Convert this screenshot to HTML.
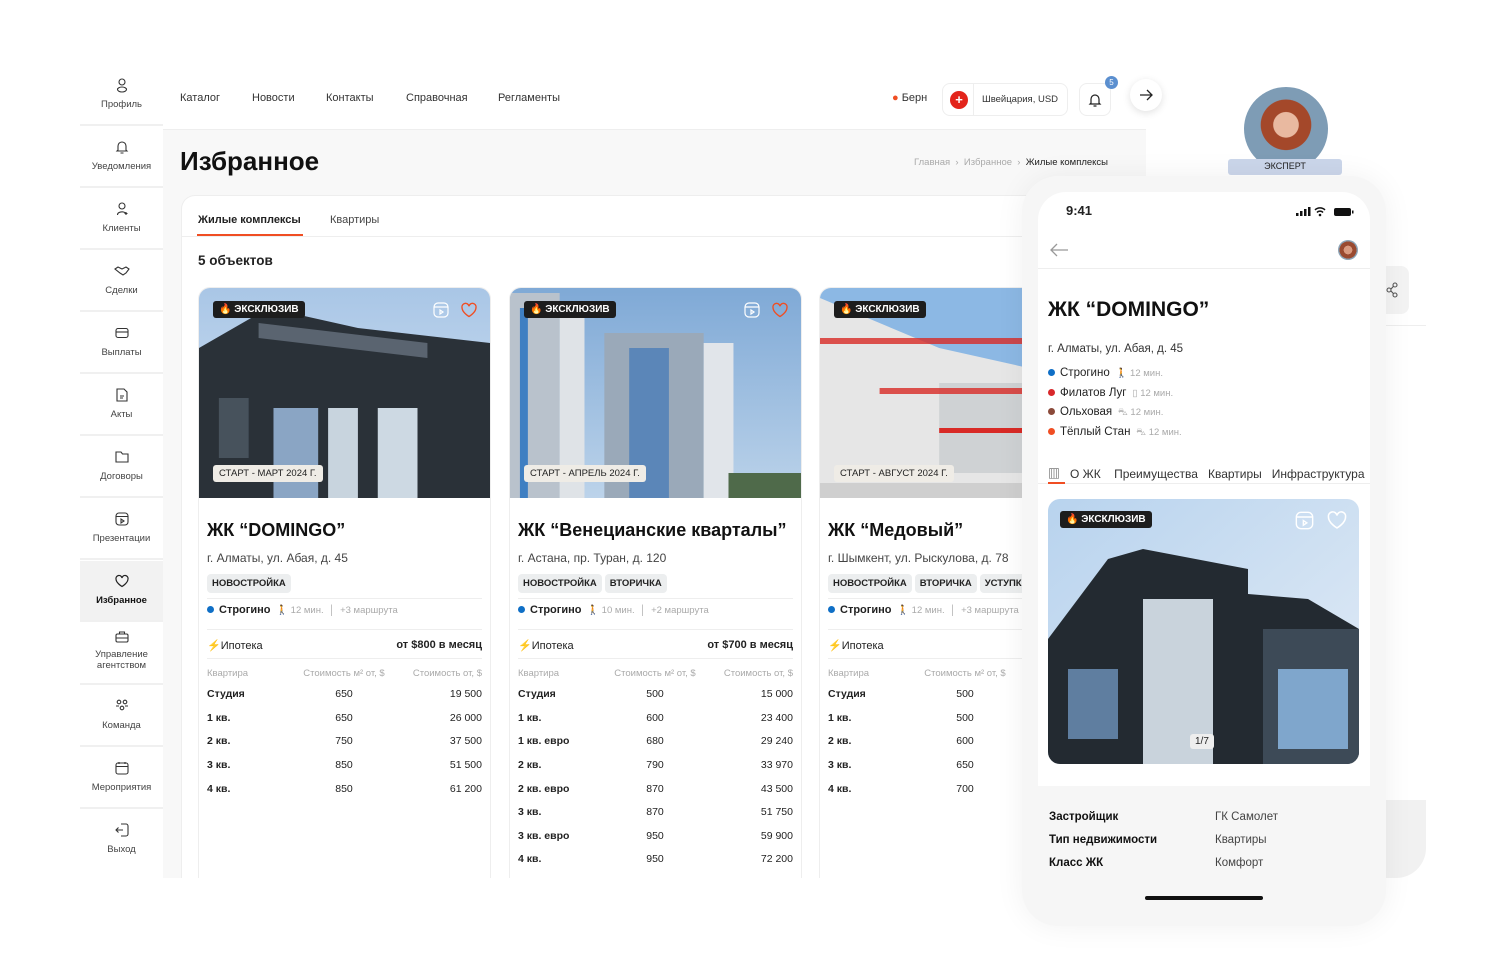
<!DOCTYPE html>
<html><head><meta charset="utf-8"><style>
*{box-sizing:border-box;margin:0;padding:0}
body{width:1506px;height:958px;background:#fff;font-family:"Liberation Sans","Noto Sans CJK SC",sans-serif;color:#222;position:relative;overflow:hidden}
.abs{position:absolute}
.side{left:80px;top:65px;width:83px;height:813px;background:#fff}
.si{position:absolute;left:0;width:83px;height:61px;border-bottom:2px solid #f0f0f0;text-align:center;font-size:9.5px;color:#444}
.si svg{display:block;margin:12px auto 6px;width:16px;height:16px}
.si.act{background:#f2f2f2;color:#111;font-weight:bold}
.main{left:163px;top:65px;width:983px;height:813px;background:#f8f8f8}
.hdr{left:163px;top:65px;width:983px;height:65px;background:#fff;border-bottom:1px solid #eee}
.nav{position:absolute;top:27px;font-size:11px;color:#333}
.panel{left:181px;top:195px;width:860px;height:683px;background:#fff;border-radius:14px 0 0 0;border:1px solid #eee;border-bottom:0}
.card{position:absolute;top:287px;width:293px;height:591px;background:#fff;border:1px solid #eee;border-bottom:0;border-radius:12px 12px 0 0;overflow:hidden}
.img{position:absolute;left:0;top:0;width:100%;height:210px}
.badge{position:absolute;left:14px;top:13px;background:#1d1d1d;color:#fff;font-size:10px;padding:3px 6px;border-radius:3px;font-weight:bold}
.start{position:absolute;left:14px;top:177px;background:#efece6;color:#222;font-size:9.5px;padding:3px 6px;border-radius:3px}
.ttl{position:absolute;left:8px;top:232px;font-size:18px;font-weight:bold;color:#111;white-space:nowrap}
.addr{position:absolute;left:8px;top:263px;font-size:12px;color:#444;white-space:nowrap}
.tags{position:absolute;left:8px;top:285px;white-space:nowrap}
.tag{display:inline-block;background:#eceeef;font-size:9.5px;font-weight:bold;padding:4px 5px;border-radius:4px;margin-right:3px;color:#222}
.ln{position:absolute;left:8px;right:8px;height:1px;background:#eee}
.metro{position:absolute;left:8px;top:316px;font-size:11px;white-space:nowrap;color:#222}
.dot{display:inline-block;width:7px;height:7px;border-radius:50%;margin-right:5px}
.gr{color:#aaa;font-size:9.5px}
.ip{position:absolute;left:8px;right:8px;top:351px;font-size:11px}
.tb{position:absolute;left:8px;right:8px;font-size:10.5px;color:#222;font-weight:bold}
.tb span{position:absolute}
.tb .c2{left:92px;width:90px;text-align:center;font-weight:normal}
.tb .c3{right:0;font-weight:normal}
.th{color:#aaa;font-weight:normal;font-size:9.5px}
.phone{left:1022px;top:176px;width:364px;height:750px;background:#f6f6f6;border-radius:36px;box-shadow:0 0 30px rgba(0,0,0,.06)}
.scr{left:1038px;top:192px;width:332px;height:594px;background:#fff;border-radius:28px 28px 0 0}
</style></head><body>

<!-- sidebar -->
<div class="abs side">
<div class="si" style="top:0"><svg viewBox="0 0 16 16" fill="none" stroke="#333" stroke-width="1.1"><circle cx="8" cy="5" r="3"/><ellipse cx="8" cy="12.5" rx="4.5" ry="2.5"/></svg>Профиль</div>
<div class="si" style="top:62px"><svg viewBox="0 0 16 16" fill="none" stroke="#333" stroke-width="1.1"><path d="M4 11V7a4 4 0 018 0v4l1 1H3z M6.5 14h3"/></svg>Уведомления</div>
<div class="si" style="top:124px"><svg viewBox="0 0 16 16" fill="none" stroke="#333" stroke-width="1.1"><circle cx="8" cy="5" r="3"/><path d="M3.5 14a4.5 3 0 018-2 M12 11v3M10.5 12.5h3"/></svg>Клиенты</div>
<div class="si" style="top:186px"><svg viewBox="0 0 16 16" fill="none" stroke="#333" stroke-width="1.1"><path d="M1 6l3-2 4 2 4-2 3 2-3 4-3 2-3-2z"/></svg>Сделки</div>
<div class="si" style="top:248px"><svg viewBox="0 0 16 16" fill="none" stroke="#333" stroke-width="1.1"><rect x="2" y="3.5" width="12" height="9" rx="2"/><path d="M2 7h12"/></svg>Выплаты</div>
<div class="si" style="top:310px"><svg viewBox="0 0 16 16" fill="none" stroke="#333" stroke-width="1.1"><path d="M3 2h7l3 3v9H3z M6 9h4M6 11h3"/></svg>Акты</div>
<div class="si" style="top:372px"><svg viewBox="0 0 16 16" fill="none" stroke="#333" stroke-width="1.1"><path d="M2 3h5l1.5 2H14v8H2z"/></svg>Договоры</div>
<div class="si" style="top:434px"><svg viewBox="0 0 16 16" fill="none" stroke="#333" stroke-width="1.1"><rect x="2" y="2" width="12" height="12" rx="3"/><path d="M2 5.5h12M7 8v4l3-2z"/></svg>Презентации</div>
<div class="si act" style="top:496px"><svg viewBox="0 0 16 16" fill="none" stroke="#222" stroke-width="1.2"><path d="M8 13.5S2 10 2 6a3 3 0 016-1 3 3 0 016 1c0 4-6 7.5-6 7.5z"/></svg>Избранное</div>
<div class="si" style="top:558px;height:62px"><svg viewBox="0 0 16 16" fill="none" stroke="#333" stroke-width="1.1" style="margin-top:6px;margin-bottom:4px"><rect x="2" y="5" width="12" height="8" rx="1.5"/><path d="M5.5 5V3h5v2M2 9h12"/></svg>Управление<br>агентством</div>
<div class="si" style="top:621px"><svg viewBox="0 0 16 16" fill="none" stroke="#333" stroke-width="1.1"><circle cx="5" cy="4" r="1.8"/><circle cx="11" cy="4" r="1.8"/><circle cx="8" cy="10" r="1.8"/><path d="M2 8h3M11 8h3"/></svg>Команда</div>
<div class="si" style="top:683px"><svg viewBox="0 0 16 16" fill="none" stroke="#333" stroke-width="1.1"><rect x="2" y="3" width="12" height="11" rx="2"/><path d="M2 6.5h12M5 2v2M11 2v2"/></svg>Мероприятия</div>
<div class="si" style="top:745px;border:0"><svg viewBox="0 0 16 16" fill="none" stroke="#333" stroke-width="1.1"><path d="M7 2h5a2 2 0 012 2v8a2 2 0 01-2 2H7 M2 8h7M4.5 5.5L2 8l2.5 2.5"/></svg>Выход</div>
</div>

<div class="abs main"></div>
<div class="abs hdr">
<span class="nav" style="left:17px">Каталог</span>
<span class="nav" style="left:89px">Новости</span>
<span class="nav" style="left:163px">Контакты</span>
<span class="nav" style="left:243px">Справочная</span>
<span class="nav" style="left:335px">Регламенты</span>
<span class="nav" style="left:729px;font-size:11px"><span style="color:#f04e23">●</span> Берн</span>
<div class="abs" style="left:779px;top:18px;width:126px;height:33px;border:1px solid #eee;border-radius:8px;background:#fff">
<div class="abs" style="left:7px;top:7px;width:18px;height:18px;border-radius:50%;background:#e3241b;color:#fff;font-size:13px;line-height:18px;text-align:center;font-weight:bold">+</div>
<div class="abs" style="left:30px;top:0;width:1px;height:31px;background:#eee"></div>
<span class="abs" style="left:39px;top:10px;font-size:9.5px;color:#333">Швейцария, USD</span></div>
<div class="abs" style="left:916px;top:18px;width:32px;height:33px;border:1px solid #eee;border-radius:8px;background:#fff">
<svg width="16" height="16" viewBox="0 0 16 16" style="position:absolute;left:7px;top:8px" fill="none" stroke="#222" stroke-width="1.2"><path d="M4 11V7a4 4 0 018 0v4l1 1H3z M6.5 14h3"/></svg></div>
<div class="abs" style="left:942px;top:11px;width:13px;height:13px;border-radius:50%;background:#5b8fcf;color:#fff;font-size:8px;text-align:center;line-height:13px">5</div>
</div>

<div class="abs" style="left:180px;top:146px;font-size:26px;font-weight:bold;color:#111">Избранное</div>
<div class="abs" style="left:914px;top:157px;font-size:9.5px;color:#aaa">Главная &nbsp;›&nbsp; Избранное &nbsp;›&nbsp; <span style="color:#222">Жилые комплексы</span></div>

<div class="abs panel">
<span class="abs" style="left:16px;top:18px;font-size:11px;font-weight:bold">Жилые комплексы</span>
<div class="abs" style="left:15px;top:38px;width:106px;height:2px;background:#f04e23"></div>
<span class="abs" style="left:148px;top:18px;font-size:11px;color:#444">Квартиры</span>
<div class="abs" style="left:0;top:40px;width:860px;height:1px;background:#eee"></div>
<span class="abs" style="left:16px;top:57px;font-size:13.5px;font-weight:bold">5 объектов</span>
</div>

<!-- card 1 -->
<div class="card" style="left:198px">
<svg class="img" viewBox="0 0 293 210" preserveAspectRatio="none"><defs><linearGradient id="s1" x1="0" y1="0" x2="0" y2="1"><stop offset="0" stop-color="#a9c6e6"/><stop offset="1" stop-color="#d8e6f4"/></linearGradient></defs><rect width="293" height="210" fill="url(#s1)"/><polygon points="0,60 70,20 160,40 293,55 293,210 0,210" fill="#2a3138"/><polygon points="60,35 230,55 230,70 60,50" fill="#5a6470"/><rect x="75" y="120" width="45" height="90" fill="#8aa5c4"/><rect x="130" y="120" width="30" height="90" fill="#c8d4de"/><rect x="180" y="120" width="40" height="90" fill="#cdd9e3"/><rect x="20" y="110" width="30" height="60" fill="#47525c"/></svg>
<div class="badge">🔥 ЭКСКЛЮЗИВ</div>
<svg class="abs" style="left:233px;top:13px" width="18" height="18" viewBox="0 0 18 18" fill="none" stroke="#fff" stroke-width="1.2"><rect x="2" y="2" width="14" height="14" rx="4"/><path d="M2 6h14M8 9v4l3-2z"/></svg>
<svg class="abs" style="left:261px;top:13px" width="18" height="18" viewBox="0 0 18 18" fill="none" stroke="#f04e23" stroke-width="1.4"><path d="M9 15.5S2 11.5 2 6.5a3.5 3.5 0 017-1.2 3.5 3.5 0 017 1.2c0 5-7 9-7 9z"/></svg>
<div class="start">СТАРТ - МАРТ 2024 Г.</div>
<div class="ttl">ЖК “DOMINGO”</div>
<div class="addr">г. Алматы, ул. Абая, д. 45</div>
<div class="tags"><span class="tag">НОВОСТРОЙКА</span></div>
<div class="ln" style="top:310px"></div>
<div class="metro"><span class="dot" style="background:#0f6fc6"></span><b>Строгино</b> <span class="gr">&nbsp;🚶 12 мин. &nbsp;│&nbsp; +3 маршрута</span></div>
<div class="ln" style="top:341px"></div>
<div class="ip"><span style="color:#f6b73c">⚡</span>Ипотека<b style="float:right">от $800 в месяц</b></div>
<div class="ln" style="top:370px"></div>
<div class="tb" style="top:380px"><span class="th">Квартира</span><span class="c2 th">Стоимость м² от, $</span><span class="c3 th">Стоимость от, $</span></div>
<div class="tb" style="top:400px"><span>Студия</span><span class="c2">650</span><span class="c3">19 500</span></div>
<div class="tb" style="top:424px"><span>1 кв.</span><span class="c2">650</span><span class="c3">26 000</span></div>
<div class="tb" style="top:447px"><span>2 кв.</span><span class="c2">750</span><span class="c3">37 500</span></div>
<div class="tb" style="top:471px"><span>3 кв.</span><span class="c2">850</span><span class="c3">51 500</span></div>
<div class="tb" style="top:495px"><span>4 кв.</span><span class="c2">850</span><span class="c3">61 200</span></div>
</div>

<!-- card 2 -->
<div class="card" style="left:509px">
<svg class="img" viewBox="0 0 293 210" preserveAspectRatio="none"><defs><linearGradient id="s2" x1="0" y1="0" x2="0" y2="1"><stop offset="0" stop-color="#7fa9d6"/><stop offset="1" stop-color="#bcd3ea"/></linearGradient></defs><rect width="293" height="210" fill="url(#s2)"/><rect x="0" y="5" width="50" height="205" fill="#b9c2cc"/><rect x="50" y="30" width="25" height="180" fill="#dfe3e7"/><rect x="95" y="45" width="100" height="165" fill="#9aa9b9"/><rect x="195" y="55" width="30" height="155" fill="#e1e5ea"/><rect x="10" y="20" width="8" height="190" fill="#3f7fc2"/><rect x="120" y="60" width="40" height="150" fill="#5b86b8"/><rect x="220" y="185" width="73" height="25" fill="#4f6a4a"/></svg>
<div class="badge">🔥 ЭКСКЛЮЗИВ</div>
<svg class="abs" style="left:233px;top:13px" width="18" height="18" viewBox="0 0 18 18" fill="none" stroke="#fff" stroke-width="1.2"><rect x="2" y="2" width="14" height="14" rx="4"/><path d="M2 6h14M8 9v4l3-2z"/></svg>
<svg class="abs" style="left:261px;top:13px" width="18" height="18" viewBox="0 0 18 18" fill="none" stroke="#f04e23" stroke-width="1.4"><path d="M9 15.5S2 11.5 2 6.5a3.5 3.5 0 017-1.2 3.5 3.5 0 017 1.2c0 5-7 9-7 9z"/></svg>
<div class="start">СТАРТ - АПРЕЛЬ 2024 Г.</div>
<div class="ttl">ЖК “Венецианские кварталы”</div>
<div class="addr">г. Астана, пр. Туран, д. 120</div>
<div class="tags"><span class="tag">НОВОСТРОЙКА</span><span class="tag">ВТОРИЧКА</span></div>
<div class="ln" style="top:310px"></div>
<div class="metro"><span class="dot" style="background:#0f6fc6"></span><b>Строгино</b> <span class="gr">&nbsp;🚶 10 мин. &nbsp;│&nbsp; +2 маршрута</span></div>
<div class="ln" style="top:341px"></div>
<div class="ip"><span style="color:#f6b73c">⚡</span>Ипотека<b style="float:right">от $700 в месяц</b></div>
<div class="ln" style="top:370px"></div>
<div class="tb" style="top:380px"><span class="th">Квартира</span><span class="c2 th">Стоимость м² от, $</span><span class="c3 th">Стоимость от, $</span></div>
<div class="tb" style="top:400px"><span>Студия</span><span class="c2">500</span><span class="c3">15 000</span></div>
<div class="tb" style="top:424px"><span>1 кв.</span><span class="c2">600</span><span class="c3">23 400</span></div>
<div class="tb" style="top:447px"><span>1 кв. евро</span><span class="c2">680</span><span class="c3">29 240</span></div>
<div class="tb" style="top:471px"><span>2 кв.</span><span class="c2">790</span><span class="c3">33 970</span></div>
<div class="tb" style="top:495px"><span>2 кв. евро</span><span class="c2">870</span><span class="c3">43 500</span></div>
<div class="tb" style="top:518px"><span>3 кв.</span><span class="c2">870</span><span class="c3">51 750</span></div>
<div class="tb" style="top:542px"><span>3 кв. евро</span><span class="c2">950</span><span class="c3">59 900</span></div>
<div class="tb" style="top:565px"><span>4 кв.</span><span class="c2">950</span><span class="c3">72 200</span></div>
</div>

<!-- card 3 -->
<div class="card" style="left:819px">
<svg class="img" viewBox="0 0 293 210" preserveAspectRatio="none"><rect width="293" height="210" fill="#8cb8e4"/><polygon points="0,10 120,60 210,80 210,210 0,210" fill="#e6e6e6"/><rect x="120" y="95" width="85" height="90" fill="#cfd2d4"/><rect x="0" y="50" width="210" height="6" fill="#d82a26" opacity=".8"/><rect x="60" y="100" width="150" height="6" fill="#d82a26" opacity=".8"/><rect x="120" y="140" width="90" height="5" fill="#d82a26"/><rect x="0" y="195" width="210" height="15" fill="#cfcfcf"/></svg>
<div class="badge">🔥 ЭКСКЛЮЗИВ</div>
<div class="start">СТАРТ - АВГУСТ 2024 Г.</div>
<div class="ttl">ЖК “Медовый”</div>
<div class="addr">г. Шымкент, ул. Рыскулова, д. 78</div>
<div class="tags"><span class="tag">НОВОСТРОЙКА</span><span class="tag">ВТОРИЧКА</span><span class="tag">УСТУПКА</span></div>
<div class="ln" style="top:310px"></div>
<div class="metro"><span class="dot" style="background:#0f6fc6"></span><b>Строгино</b> <span class="gr">&nbsp;🚶 12 мин. &nbsp;│&nbsp; +3 маршрута</span></div>
<div class="ln" style="top:341px"></div>
<div class="ip"><span style="color:#f6b73c">⚡</span>Ипотека</div>
<div class="ln" style="top:370px"></div>
<div class="tb" style="top:380px"><span class="th">Квартира</span><span class="c2 th">Стоимость м² от, $</span></div>
<div class="tb" style="top:400px"><span>Студия</span><span class="c2">500</span></div>
<div class="tb" style="top:424px"><span>1 кв.</span><span class="c2">500</span></div>
<div class="tb" style="top:447px"><span>2 кв.</span><span class="c2">600</span></div>
<div class="tb" style="top:471px"><span>3 кв.</span><span class="c2">650</span></div>
<div class="tb" style="top:495px"><span>4 кв.</span><span class="c2">700</span></div>
</div>

<!-- right panel -->
<div class="abs" style="left:1146px;top:65px;width:280px;height:756px;background:#fff;border-radius:40px 0 0 0"></div>
<div class="abs" style="left:1380px;top:266px;width:29px;height:48px;background:#f3f3f3;border-radius:0 8px 8px 0">
<svg class="abs" style="left:5px;top:16px" width="14" height="16" viewBox="0 0 14 16" fill="none" stroke="#555" stroke-width="1.1"><circle cx="10" cy="3" r="2"/><circle cx="4" cy="8" r="2"/><circle cx="10" cy="13" r="2"/><path d="M6 7l2.3-2.5M6 9l2.3 2.5"/></svg></div>
<div class="abs" style="left:1386px;top:325px;width:40px;height:1px;background:#eee"></div>
<div class="abs" style="left:1386px;top:800px;width:40px;height:78px;background:#f1f1f1;border-radius:0 0 30px 0"></div>
<div class="abs" style="left:1244px;top:87px;width:84px;height:84px;border-radius:50%;background:radial-gradient(circle at 50% 45%,#e9b9a0 0 20%,#a4482a 21% 40%,#7e9cb5 41%)"></div>
<div class="abs" style="left:1228px;top:159px;width:114px;height:16px;background:#cbd6ea;border-radius:3px;font-size:9px;text-align:center;line-height:14px;color:#222;overflow:hidden">ЭКСПЕРТ</div>
<div class="abs" style="left:1130px;top:79px;width:32px;height:32px;border-radius:50%;background:#fff;box-shadow:0 2px 8px rgba(0,0,0,.12)">
<svg class="abs" style="left:9px;top:9px" width="14" height="14" viewBox="0 0 14 14" fill="none" stroke="#222" stroke-width="1.3"><path d="M1 7h12M8 2l5 5-5 5"/></svg></div>

<!-- phone -->
<div class="abs phone"></div>
<div class="abs scr">
<span class="abs" style="left:28px;top:11px;font-size:13px;font-weight:bold">9:41</span>
<svg class="abs" style="left:258px;top:14px" width="58" height="11" viewBox="0 0 58 11"><rect x="0" y="7" width="2.5" height="3" fill="#111"/><rect x="4" y="5" width="2.5" height="5" fill="#111"/><rect x="8" y="3" width="2.5" height="7" fill="#111"/><rect x="12" y="1" width="2.5" height="9" fill="#111"/><path d="M19 4a7 7 0 0110 0M21 6.5a4 4 0 016 0" stroke="#111" stroke-width="1.5" fill="none"/><circle cx="24" cy="9" r="1.3" fill="#111"/><rect x="38" y="2" width="17" height="8" rx="2" fill="#111"/><rect x="56" y="4.5" width="1.5" height="3" fill="#111"/></svg>
<svg class="abs" style="left:11px;top:51px" width="20" height="14" viewBox="0 0 20 14" fill="none" stroke="#999" stroke-width="1.3"><path d="M19 7H2M8 1L2 7l6 6"/></svg>
<div class="abs" style="left:300px;top:48px;width:20px;height:20px;border-radius:50%;background:radial-gradient(circle,#d99a80 0 30%,#9a4a30 31% 60%,#8aa2b5 61%)"></div>
<div class="abs" style="left:0;top:76px;width:332px;height:1px;background:#eee"></div>
<span class="abs" style="left:10px;top:106px;font-size:21px;font-weight:bold;color:#111">ЖК “DOMINGO”</span>
<span class="abs" style="left:10px;top:151px;font-size:11.5px;color:#333">г. Алматы, ул. Абая, д. 45</span>
<div class="abs" style="left:10px;top:172px;font-size:11.5px;line-height:19.5px;color:#222">
<div><span class="dot" style="background:#0f6fc6"></span>Строгино <span class="gr">&nbsp;🚶 12 мин.</span></div>
<div><span class="dot" style="background:#d8282b"></span>Филатов Луг <span class="gr">&nbsp;▯ 12 мин.</span></div>
<div><span class="dot" style="background:#8b4a3a"></span>Ольховая <span class="gr">&nbsp;⛍ 12 мин.</span></div>
<div><span class="dot" style="background:#f04e23"></span>Тёплый Стан <span class="gr">&nbsp;⛍ 12 мин.</span></div>
</div>
<div class="abs" style="left:10px;top:273px;font-size:12px;color:#333;white-space:nowrap">▥ &nbsp; О ЖК &nbsp;&nbsp; Преимущества &nbsp;&nbsp;Квартиры &nbsp;&nbsp;Инфраструктура</div>
<div class="abs" style="left:0;top:291px;width:332px;height:1px;background:#eee"></div>
<div class="abs" style="left:10px;top:290px;width:17px;height:2px;background:#f04e23"></div>
<div class="abs" style="left:10px;top:307px;width:311px;height:265px;border-radius:12px;overflow:hidden">
<svg width="311" height="265" viewBox="0 0 311 265"><defs><linearGradient id="s4" x1="0" y1="0" x2="1" y2="1"><stop offset="0" stop-color="#b8d3ee"/><stop offset="1" stop-color="#e3ecf6"/></linearGradient></defs><rect width="311" height="265" fill="url(#s4)"/><polygon points="0,140 60,60 95,50 200,70 200,95 260,100 311,130 311,265 0,265" fill="#232a31"/><rect x="95" y="100" width="70" height="165" fill="#c9d3dc"/><rect x="215" y="130" width="96" height="135" fill="#3d4a57"/><rect x="230" y="170" width="70" height="80" fill="#7fa6cc"/><rect x="20" y="170" width="50" height="70" fill="#5f7ea0"/></svg>
<div class="badge" style="left:12px;top:12px">🔥 ЭКСКЛЮЗИВ</div>
<svg class="abs" style="left:246px;top:11px" width="21" height="21" viewBox="0 0 18 18" fill="none" stroke="#fff" stroke-width="1.2"><rect x="2" y="2" width="14" height="14" rx="4"/><path d="M2 6h14M8 9v4l3-2z"/></svg>
<svg class="abs" style="left:278px;top:10px" width="22" height="22" viewBox="0 0 18 18" fill="none" stroke="#fff" stroke-width="1.3"><path d="M9 15.5S2 11.5 2 6.5a3.5 3.5 0 017-1.2 3.5 3.5 0 017 1.2c0 5-7 9-7 9z"/></svg>
<div class="abs" style="left:142px;top:235px;background:#eee;font-size:10px;padding:2px 5px;border-radius:3px">1/7</div>
</div>
</div>
<div class="abs" style="left:1049px;top:806px;font-size:11.5px;line-height:23px;font-weight:bold;color:#111">Застройщик<br>Тип недвижимости<br>Класс ЖК</div>
<div class="abs" style="left:1215px;top:806px;font-size:11.5px;line-height:23px;color:#444">ГК Самолет<br>Квартиры<br>Комфорт</div>
<div class="abs" style="left:1145px;top:896px;width:118px;height:4px;border-radius:2px;background:#111"></div>
</body></html>
